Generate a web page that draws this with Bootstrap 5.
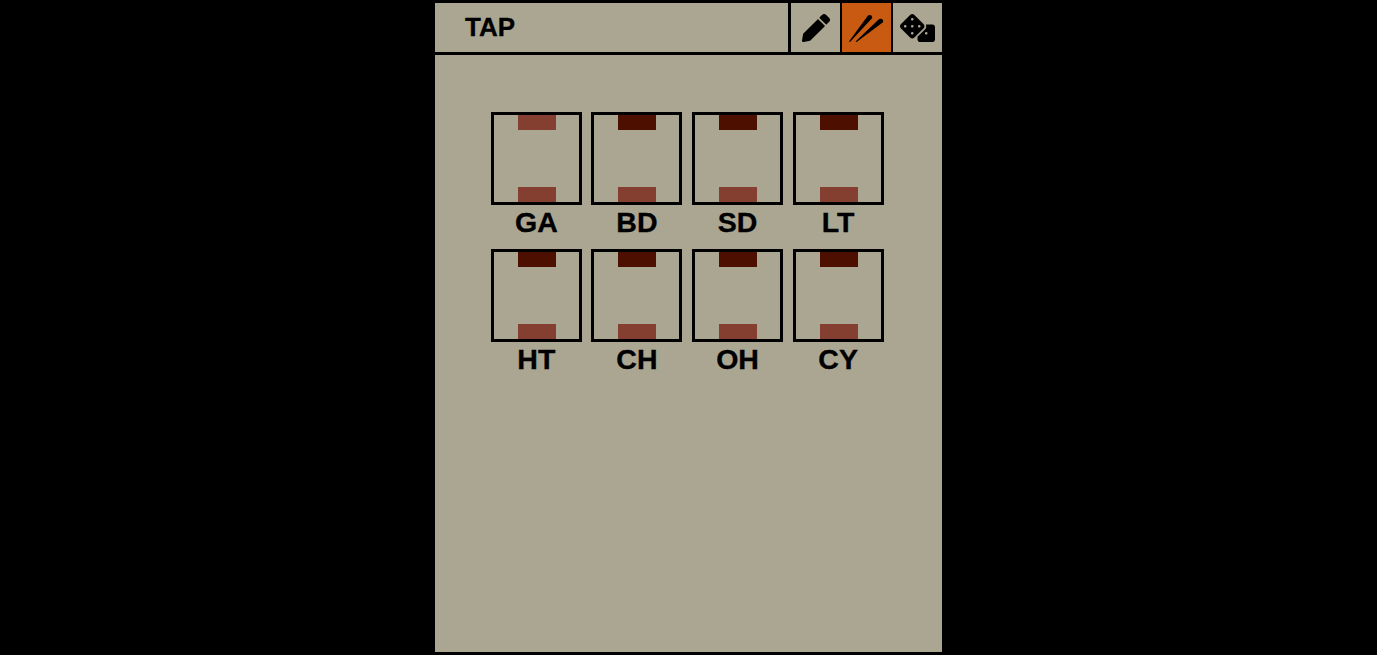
<!DOCTYPE html>
<html lang="en">
<head>
<meta charset="utf-8">
<title>TAP</title>
<link href="https://cdn.jsdelivr.net/npm/bootstrap@5.3.0/dist/css/bootstrap.min.css" rel="stylesheet">
<style>
html,body{height:100%;background:#000;font-family:"Liberation Sans",Arial,sans-serif;color:#000;overflow:hidden}
.panel{width:507px;height:649px;margin:3px 0 0 435px;background:#aba691}
.topbar{box-sizing:content-box;height:49px;border-bottom:3px solid #000}
.title{font-size:26px;font-weight:700;line-height:1;padding:0 0 2px 30px;-webkit-text-stroke:.3px #000}
.modebtn{width:51px;border:0;border-left:2px solid #000;border-radius:0;padding:0;background:transparent;color:#000}
.modebtn.first{width:52px;border-left-width:3px}
.modebtn.on,.modebtn.on:hover{background:#c85a12}
.grid{padding:57px 0 0 55.85px;column-gap:9.6px;display:grid;grid-template-columns:repeat(4,91px);grid-auto-rows:137px}
.pad{height:93px;border:3px solid #000}
.nudge{padding-left:1px}
.cue{width:38px;height:15px}
.dim{background:#853f31}
.lit{background:#4d0f00}
.lbl{font-size:28.5px;font-weight:700;line-height:1;margin-top:3px;text-align:center;-webkit-text-stroke:.35px #000}
</style>
</head>
<body>
<div class="panel d-flex flex-column">
  <div class="topbar d-flex align-items-stretch">
    <div class="title flex-grow-1 d-flex align-items-center">TAP</div>
    <button class="btn modebtn first d-flex align-items-center justify-content-center" type="button" aria-label="Edit">
      <svg width="28" height="28" viewBox="0 0 512 512"><path d="M497.9 142.1l-46.1 46.1c-4.7 4.7-12.3 4.7-17 0l-111-111c-4.7-4.7-4.7-12.3 0-17l46.1-46.1c18.7-18.7 49.1-18.7 67.9 0l60.1 60.1c18.8 18.7 18.8 49.1 0 67.9zM284.2 99.8L21.6 362.4.4 483.9c-2.9 16.4 11.4 30.6 27.8 27.8l121.5-21.3 262.6-262.6c4.7-4.7 4.7-12.3 0-17l-111-111c-4.8-4.7-12.4-4.7-17.1 0z"/></svg>
    </button>
    <button class="btn modebtn on d-flex align-items-center justify-content-center" type="button" aria-label="Tap">
      <svg width="36" height="28" viewBox="0 0 36 28"><path d="M0 27.4 L18.6 2 C20.4 -.4 24.4 1.6 22.8 4.4 L1 28 Z"/><path d="M6.6 27.4 L29.6 5.6 C32 3.4 35.6 6.2 33.6 8.6 L7.6 28 Z"/></svg>
    </button>
    <button class="btn modebtn d-flex align-items-center justify-content-center" type="button" aria-label="Random">
      <svg width="35" height="28" viewBox="0 0 640 512"><path d="M592 192H473.26c12.69 29.59 7.12 65.2-17 89.32L320 417.58V464c0 26.51 21.49 48 48 48h224c26.51 0 48-21.49 48-48V240c0-26.51-21.49-48-48-48zM480 376c-13.25 0-24-10.75-24-24 0-13.26 10.75-24 24-24s24 10.74 24 24c0 13.25-10.75 24-24 24zm-46.37-186.7L258.7 14.37c-19.16-19.16-50.23-19.16-69.39 0L14.37 189.3c-19.16 19.16-19.16 50.23 0 69.39L189.3 433.63c19.16 19.16 50.23 19.16 69.39 0L433.63 258.7c19.16-19.17 19.16-50.24 0-69.4zM96 248c-13.25 0-24-10.75-24-24 0-13.26 10.75-24 24-24s24 10.74 24 24c0 13.25-10.75 24-24 24zm128 128c-13.25 0-24-10.75-24-24 0-13.26 10.75-24 24-24s24 10.74 24 24c0 13.25-10.75 24-24 24zm0-128c-13.25 0-24-10.75-24-24 0-13.26 10.75-24 24-24s24 10.74 24 24c0 13.25-10.75 24-24 24zm0-128c-13.25 0-24-10.75-24-24 0-13.26 10.75-24 24-24s24 10.74 24 24c0 13.25-10.75 24-24 24zm128 128c-13.25 0-24-10.75-24-24 0-13.26 10.75-24 24-24s24 10.74 24 24c0 13.25-10.75 24-24 24z"/></svg>
    </button>
  </div>
  <div class="grid">
    <div><div class="pad nudge d-flex flex-column justify-content-between align-items-center"><div class="cue dim"></div><div class="cue dim"></div></div><div class="lbl">GA</div></div>
    <div><div class="pad d-flex flex-column justify-content-between align-items-center"><div class="cue lit"></div><div class="cue dim"></div></div><div class="lbl">BD</div></div>
    <div><div class="pad d-flex flex-column justify-content-between align-items-center"><div class="cue lit"></div><div class="cue dim"></div></div><div class="lbl">SD</div></div>
    <div><div class="pad nudge d-flex flex-column justify-content-between align-items-center"><div class="cue lit"></div><div class="cue dim"></div></div><div class="lbl">LT</div></div>
    <div><div class="pad nudge d-flex flex-column justify-content-between align-items-center"><div class="cue lit"></div><div class="cue dim"></div></div><div class="lbl">HT</div></div>
    <div><div class="pad d-flex flex-column justify-content-between align-items-center"><div class="cue lit"></div><div class="cue dim"></div></div><div class="lbl">CH</div></div>
    <div><div class="pad d-flex flex-column justify-content-between align-items-center"><div class="cue lit"></div><div class="cue dim"></div></div><div class="lbl">OH</div></div>
    <div><div class="pad nudge d-flex flex-column justify-content-between align-items-center"><div class="cue lit"></div><div class="cue dim"></div></div><div class="lbl">CY</div></div>
  </div>
</div>
<script src="https://cdn.jsdelivr.net/npm/bootstrap@5.3.0/dist/js/bootstrap.bundle.min.js"></script>
</body>
</html>
